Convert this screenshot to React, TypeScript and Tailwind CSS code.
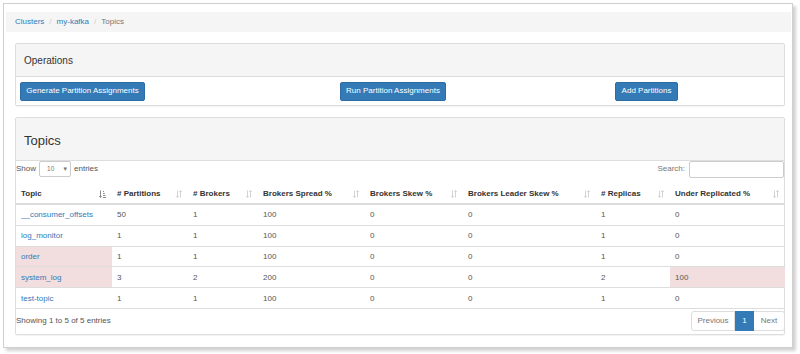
import React from "react";

const SortBoth = () => (
  <svg width="6" height="8" viewBox="0 0 6 8" className="shrink-0">
    <g stroke="#d4d4d4" strokeWidth="1" fill="none">
      <path d="M1.5 0.5 V7.5" />
      <path d="M0.3 6 L1.5 7.5 L2.7 6" />
      <path d="M4.5 7.5 V0.5" />
      <path d="M3.3 2 L4.5 0.5 L5.7 2" />
    </g>
  </svg>
);

const SortAsc = () => (
  <svg width="7" height="8" viewBox="0 0 7 8" className="shrink-0">
    <g stroke="#8a8a8a" strokeWidth="1" fill="none">
      <path d="M1.5 0.5 V7.5" />
      <path d="M0.3 6 L1.5 7.5 L2.7 6" />
      <path d="M4 1.5 H5" />
      <path d="M4 3.5 H5.8" />
      <path d="M4 5.5 H6.5" />
      <path d="M4 7.5 H7" />
    </g>
  </svg>
);

type Row = {
  topic: string;
  partitions: string;
  brokers: string;
  spread: string;
  skew: string;
  leader: string;
  replicas: string;
  under: string;
  redTopic?: boolean;
  redUnder?: boolean;
};

const rows: Row[] = [
  { topic: "__consumer_offsets", partitions: "50", brokers: "1", spread: "100", skew: "0", leader: "0", replicas: "1", under: "0" },
  { topic: "log_monitor", partitions: "1", brokers: "1", spread: "100", skew: "0", leader: "0", replicas: "1", under: "0" },
  { topic: "order", partitions: "1", brokers: "1", spread: "100", skew: "0", leader: "0", replicas: "1", under: "0", redTopic: true },
  { topic: "system_log", partitions: "3", brokers: "2", spread: "200", skew: "0", leader: "0", replicas: "2", under: "100", redTopic: true, redUnder: true },
  { topic: "test-topic", partitions: "1", brokers: "1", spread: "100", skew: "0", leader: "0", replicas: "1", under: "0" },
];

const headers = [
  "Topic",
  "# Partitions",
  "# Brokers",
  "Brokers Spread %",
  "Brokers Skew %",
  "Brokers Leader Skew %",
  "# Replicas",
  "Under Replicated %",
];

const widths = [96, 76, 70, 107, 98, 133, 74, 115];

export default function App() {
  return (
    <div
      className="w-[800px] h-[354px] bg-white overflow-hidden text-[#333]"
      style={{ fontFamily: "'Liberation Sans', Arial, sans-serif" }}
    >
      <div className="ml-[3px] mt-[3px] w-[790px] h-[345px] border border-[#cfcfcf] bg-white shadow-[3px_3px_3px_rgba(0,0,0,0.18)]">
        {/* breadcrumb */}
        <div className="ml-[2px] mt-[8px] w-[785px] h-[20px] bg-[#f5f5f5] flex items-center pl-[9px] text-[8px]">
          <span className="text-[#337ab7]">Clusters</span>
          <span className="text-[#ccc] px-[5px]">/</span>
          <span className="text-[#337ab7]">my-kafka</span>
          <span className="text-[#ccc] px-[5px]">/</span>
          <span className="text-[#777]">Topics</span>
        </div>

        {/* Operations panel */}
        <div className="ml-[11px] mt-[11px] w-[770px] border border-[#ddd] rounded-[2px] shadow-[0_1px_1px_rgba(0,0,0,0.05)]">
          <div className="h-[33px] bg-[#f5f5f5] border-b border-[#ddd] flex items-center pl-[8px] text-[10px] text-[#333]">
            Operations
          </div>
          <div className="h-[28px] flex items-center pl-[4px]">
            <button className="h-[19px] w-[125px] bg-[#337ab7] border border-[#2e6da4] rounded-[2px] text-white text-[8px] flex items-center justify-center">
              Generate Partition Assignments
            </button>
            <button className="ml-[195px] h-[19px] w-[106px] bg-[#337ab7] border border-[#2e6da4] rounded-[2px] text-white text-[8px] flex items-center justify-center">
              Run Partition Assignments
            </button>
            <button className="ml-[169px] h-[19px] w-[63px] bg-[#337ab7] border border-[#2e6da4] rounded-[2px] text-white text-[8px] flex items-center justify-center">
              Add Partitions
            </button>
          </div>
        </div>

        {/* Topics panel */}
        <div className="ml-[11px] mt-[11px] w-[770px] border border-[#ddd] rounded-[2px] shadow-[0_1px_1px_rgba(0,0,0,0.05)]">
          <div className="h-[43px] bg-[#f5f5f5] border-b border-[#ddd] flex items-center pl-[8px] pt-[3px] text-[13px] text-[#333]">
            Topics
          </div>
          <div className="h-[16px] flex items-center justify-between text-[8px] text-[#555]">
            <div className="flex items-center pl-[0px]">
              <span>Show</span>
              <div className="ml-[3px] w-[32px] h-[16px] border border-[#ccc] rounded-[2px] flex items-center pl-[7px] text-[6.5px] text-[#777]">
                <span>10</span>
                <span className="ml-[8px] text-[6px]">▼</span>
              </div>
              <span className="ml-[3px]">entries</span>
            </div>
            <div className="flex items-center">
              <span className="text-[#777]">Search:</span>
              <div className="ml-[4px] w-[95px] h-[17px] border border-[#ccc] rounded-[2px] bg-white" />
            </div>
          </div>

          <table
            className="mt-[7px] table-fixed text-[8px]"
            style={{ borderCollapse: "separate", borderSpacing: 0, width: 768 }}
          >
            <colgroup>
              {widths.map((w, i) => (
                <col key={i} style={{ width: w }} />
              ))}
            </colgroup>
            <thead>
              <tr>
                {headers.map((h, i) => (
                  <th
                    key={h}
                    className="h-[21px] p-0 pl-[5px] pr-[6px] border-b-2 border-[#ddd] text-left font-bold text-[#333]"
                  >
                    <div className="flex items-center justify-between">
                      <span>{h}</span>
                      {i === 0 ? <SortAsc /> : <SortBoth />}
                    </div>
                  </th>
                ))}
              </tr>
            </thead>
            <tbody>
              {rows.map((r) => {
                const cells = [r.topic, r.partitions, r.brokers, r.spread, r.skew, r.leader, r.replicas, r.under];
                return (
                  <tr key={r.topic}>
                    {cells.map((c, i) => {
                      const red = (i === 0 && r.redTopic) || (i === 7 && r.redUnder);
                      return (
                        <td
                          key={i}
                          className={
                            "h-[20.8px] p-0 pl-[5px] pt-[1px] border-b border-[#ddd] " +
                            (red ? "bg-[#f2dede] " : "") +
                            (i === 0 ? "text-[#337ab7]" : "text-[#555]")
                          }
                        >
                          {c}
                        </td>
                      );
                    })}
                  </tr>
                );
              })}
            </tbody>
          </table>

          <div className="mt-[2px] mb-[3px] h-[20px] flex items-center justify-between text-[8px]">
            <span className="pl-[0px] text-[#555]">Showing 1 to 5 of 5 entries</span>
            <div className="flex h-[20px] -mr-[1px]">
              <div className="w-[44px] border border-[#ddd] rounded-l-[3px] flex items-center justify-center text-[#777]">
                Previous
              </div>
              <div className="w-[19px] bg-[#337ab7] border border-[#337ab7] flex items-center justify-center text-white">
                1
              </div>
              <div className="w-[31px] border border-[#ddd] border-l-0 rounded-r-[3px] flex items-center justify-center text-[#777]">
                Next
              </div>
            </div>
          </div>
        </div>
      </div>
    </div>
  );
}
